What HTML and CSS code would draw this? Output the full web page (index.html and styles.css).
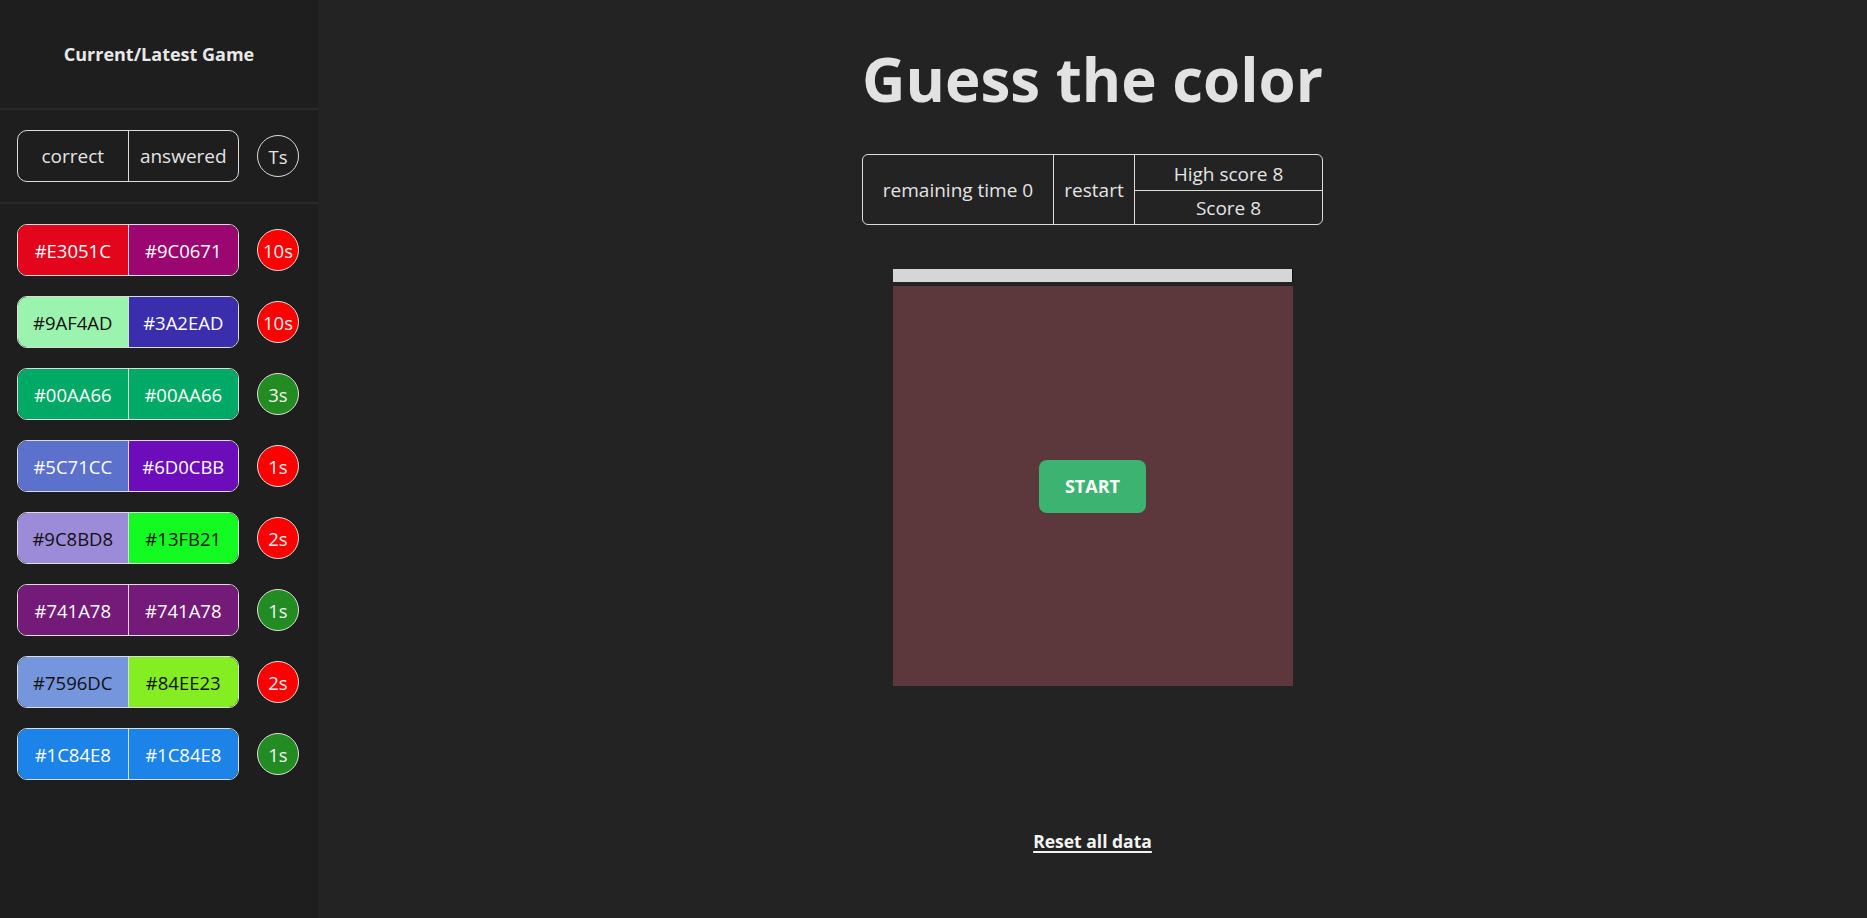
FILE: index.html
```html
<!DOCTYPE html>
<html lang="en">
<head>
<meta charset="utf-8">
<title>Guess the color</title>
<link rel="stylesheet" href="styles.css">
</head>
<body>
<aside class="sidebar">
  <div class="side-head">Current/Latest Game</div>
  <div class="side-legend">
    <div class="row">
      <div class="pill legend">
        <span class="half">correct</span>
        <span class="half">answered</span>
      </div>
      <span class="badge plain">Ts</span>
    </div>
  </div>
  <div class="side-list">
    <div class="row">
      <div class="pill"><span class="half on-dark" style="background:#E3051C">#E3051C</span><span class="half on-dark" style="background:#9C0671">#9C0671</span></div>
      <span class="badge wrong">10s</span>
    </div>
    <div class="row">
      <div class="pill"><span class="half on-light" style="background:#9AF4AD">#9AF4AD</span><span class="half on-dark" style="background:#3A2EAD">#3A2EAD</span></div>
      <span class="badge wrong">10s</span>
    </div>
    <div class="row">
      <div class="pill"><span class="half on-dark" style="background:#00AA66">#00AA66</span><span class="half on-dark" style="background:#00AA66">#00AA66</span></div>
      <span class="badge right">3s</span>
    </div>
    <div class="row">
      <div class="pill"><span class="half on-dark" style="background:#5C71CC">#5C71CC</span><span class="half on-dark" style="background:#6D0CBB">#6D0CBB</span></div>
      <span class="badge wrong">1s</span>
    </div>
    <div class="row">
      <div class="pill"><span class="half on-light" style="background:#9C8BD8">#9C8BD8</span><span class="half on-light" style="background:#13FB21">#13FB21</span></div>
      <span class="badge wrong">2s</span>
    </div>
    <div class="row">
      <div class="pill"><span class="half on-dark" style="background:#741A78">#741A78</span><span class="half on-dark" style="background:#741A78">#741A78</span></div>
      <span class="badge right">1s</span>
    </div>
    <div class="row">
      <div class="pill"><span class="half on-light" style="background:#7596DC">#7596DC</span><span class="half on-light" style="background:#84EE23">#84EE23</span></div>
      <span class="badge wrong">2s</span>
    </div>
    <div class="row">
      <div class="pill"><span class="half on-dark" style="background:#1C84E8">#1C84E8</span><span class="half on-dark" style="background:#1C84E8">#1C84E8</span></div>
      <span class="badge right">1s</span>
    </div>
  </div>
</aside>
<main class="main">
  <h1 class="title">Guess the color</h1>
  <div class="stats">
    <div class="cell time">remaining time 0</div>
    <div class="cell restart">restart</div>
    <div class="cell scores">
      <div class="score-line high">High score 8</div>
      <div class="score-line">Score 8</div>
    </div>
  </div>
  <div class="game">
    <div class="timer-bar"></div>
    <div class="board">
      <button class="start">START</button>
    </div>
  </div>
  <a class="reset" href="#">Reset all data</a>
</main>
</body>
</html>
```
FILE: styles.css
```css
* { box-sizing: border-box; }
html, body { margin: 0; padding: 0; }
body {
  display: flex;
  height: 100vh;
  background: #232323;
  color: #e4e4e4;
  font-family: "Open Sans", "Noto Sans", sans-serif;
  overflow: hidden;
}
.sidebar {
  width: 318px;
  flex: none;
  background: #1e1e1e;
  display: flex;
  flex-direction: column;
}
.side-head {
  height: 110px;
  display: flex;
  align-items: center;
  justify-content: center;
  font-weight: 700;
  font-size: 18px;
  color: #e8e8e8;
  border-bottom: 2px solid #292929;
}
.side-legend {
  padding: 20px 0;
  border-bottom: 2px solid #292929;
}
.side-list {
  padding-top: 20px;
  display: flex;
  flex-direction: column;
  gap: 20px;
}
.row {
  display: flex;
  align-items: center;
  gap: 18px;
  padding-left: 17px;
}
.pill {
  width: 222px;
  height: 52px;
  display: flex;
  border: 1px solid #dcdcdc;
  border-radius: 10px;
  overflow: hidden;
  font-size: 18.5px;
}
.half {
  flex: 1;
  display: flex;
  align-items: center;
  justify-content: center;
}
.half + .half { border-left: 1px solid #dcdcdc; }
.legend .half { color: #e4e4e4; font-size: 19px; }
.on-dark { color: #ffffff; }
.on-light { color: #111111; }
.badge {
  width: 42px;
  height: 42px;
  flex: none;
  border-radius: 50%;
  border: 1px solid #dcdcdc;
  display: flex;
  align-items: center;
  justify-content: center;
  font-size: 18.5px;
  color: #f4f4f4;
}
.badge.plain { color: #e4e4e4; }
.badge.wrong { background: #ff0000; }
.badge.right { background: #228b22; }

.main {
  flex: 1;
  display: flex;
  flex-direction: column;
  align-items: center;
  padding-top: 41px;
}
.title {
  margin: 0;
  font-size: 60px;
  line-height: 76px;
  font-weight: 700;
  color: #e2e2e2;
}
.stats {
  margin-top: 37px;
  width: 461px;
  height: 71px;
  display: grid;
  grid-template-columns: 190px 81px 1fr;
  border: 1px solid #dcdcdc;
  border-radius: 6px;
  font-size: 19px;
  color: #e4e4e4;
}
.cell {
  display: flex;
  align-items: center;
  justify-content: center;
}
.cell + .cell { border-left: 1px solid #dcdcdc; }
.scores {
  flex-direction: column;
  align-items: stretch;
}
.score-line {
  flex: 1;
  display: flex;
  align-items: center;
  justify-content: center;
}
.score-line.high { flex: none; height: 35px; padding-top: 3px; }
.score-line + .score-line { border-top: 1px solid #dcdcdc; }
.game {
  margin-top: 44px;
  display: flex;
  flex-direction: column;
  gap: 4px;
}
.timer-bar {
  width: 400px;
  height: 13px;
  background: #d6d6d6;
  border-right: 1px solid #111;
}
.board {
  width: 400px;
  height: 400px;
  background: #5c383c;
  display: flex;
  align-items: center;
  justify-content: center;
}
.start {
  width: 107px;
  height: 53px;
  border: none;
  border-radius: 8px;
  background: #3cb371;
  color: #ffffff;
  font-family: "Open Sans", "Noto Sans", sans-serif;
  font-weight: 700;
  font-size: 18px;
  padding: 0;
}
.reset {
  margin-top: 143px;
  font-size: 17.5px;
  line-height: 24px;
  font-weight: 700;
  color: #f4f4f4;
  text-decoration: underline;
  text-decoration-thickness: 2px;
  text-underline-offset: 3px;
}
```
